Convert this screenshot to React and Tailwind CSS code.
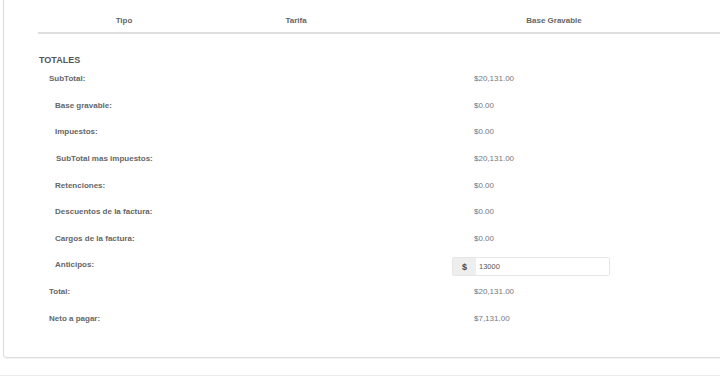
import React from 'react';

const rows = [
  { label: 'SubTotal:', value: '$20,131.00', indent: 'pl-[11px]' },
  { label: 'Base gravable:', value: '$0.00', indent: 'pl-[17px]' },
  { label: 'Impuestos:', value: '$0.00', indent: 'pl-[17px]' },
  { label: 'SubTotal mas impuestos:', value: '$20,131.00', indent: 'pl-[18px]' },
  { label: 'Retenciones:', value: '$0.00', indent: 'pl-[17px]' },
  { label: 'Descuentos de la factura:', value: '$0.00', indent: 'pl-[17px]' },
  { label: 'Cargos de la factura:', value: '$0.00', indent: 'pl-[17px]' },
  { label: 'Anticipos:', input: '13000', indent: 'pl-[17px]' },
  { label: 'Total:', value: '$20,131.00', indent: 'pl-[11px]' },
  { label: 'Neto a pagar:', value: '$7,131.00', indent: 'pl-[11px]' },
];

const App = () => {
  return (
    <div className="w-[720px] h-[385px] overflow-hidden bg-white font-['Liberation_Sans',Arial,sans-serif]">
      {/* Totals card */}
      <div className="ml-[3px] w-[740px] h-[358px] border-l border-b border-[#dcdcdc] rounded-bl-[4px] shadow-[0_1px_1px_rgba(0,0,0,0.05)]">
        <div className="pl-[34px]">
          {/* Taxes table header */}
          <div className="flex h-[34px] pt-[16px] border-b-2 border-[#dedede] text-[8px] leading-[10px] font-bold text-[#666]">
            <div className="w-[172px] text-center">Tipo</div>
            <div className="w-[172px] text-center">Tarifa</div>
            <div className="w-[344px] text-center">Base Gravable</div>
          </div>

          <h3 className="mt-[21px] ml-[1px] text-[9px] leading-[11px] font-bold text-[#555]">TOTALES</h3>

          <div>
            {rows.map(r => (
              <div key={r.label} className="flex items-center h-[26.6px] leading-[12px]">
                <div className={`w-[414px] ${r.indent} text-[8px] font-bold text-[#666]`}>{r.label}</div>
                <div className="flex-1">
                  {r.input ? (
                    <div className="flex mt-[3px] w-[158px] h-[19px] border border-[#e6e6e6] rounded-[2px]">
                      <span className="w-[23px] flex items-center justify-center bg-[#eeeeee] text-[9px] font-bold text-[#444]">$</span>
                      <input
                        type="text"
                        defaultValue={r.input}
                        className="flex-1 min-w-0 pl-[3px] text-[7.5px] text-[#555] bg-white outline-none"
                      />
                    </div>
                  ) : (
                    <div className="pl-[22px] text-[8px] text-[#777]">{r.value}</div>
                  )}
                </div>
              </div>
            ))}
          </div>
        </div>
      </div>

      {/* next card edge */}
      <div className="mt-[17px] h-[10px] border-t border-[#ececec]"></div>
    </div>
  );
};

export default App;
